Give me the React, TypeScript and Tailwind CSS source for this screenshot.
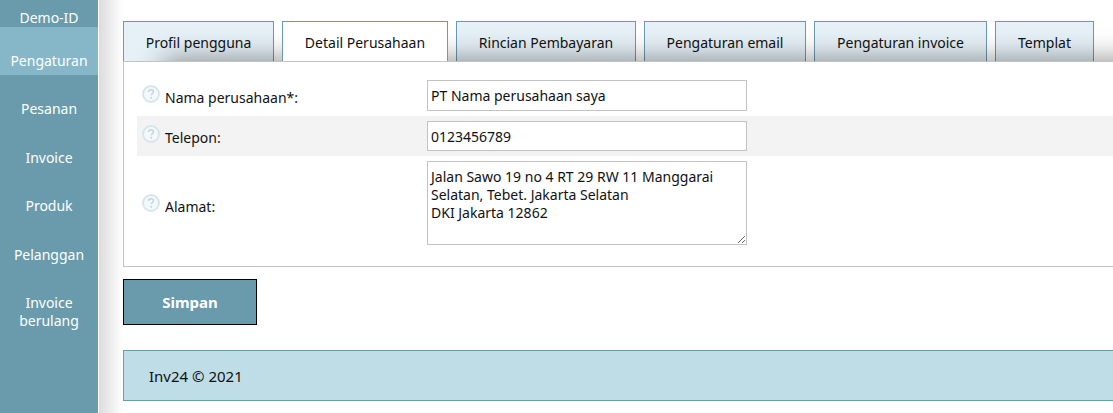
import { ReactNode } from "react";

const menuItems = ["Pengaturan", "Pesanan", "Invoice", "Produk", "Pelanggan", "Invoice berulang"];

const tabs = [
  { label: "Profil pengguna", width: "w-[151px]" },
  { label: "Detail Perusahaan", width: "w-[166px]" },
  { label: "Rincian Pembayaran", width: "w-[180px]" },
  { label: "Pengaturan email", width: "w-[162px]" },
  { label: "Pengaturan invoice", width: "w-[173px]" },
  { label: "Templat", width: "w-[99px]" },
];

const fieldClass =
  "block w-[320px] border border-[#c3c3c3] bg-white px-[3px] text-[14px] leading-[18px] text-[#111]";

const HelpIcon = () => (
  <svg className="mb-1 h-5 w-5 shrink-0" viewBox="0 0 20 20" fill="none" aria-hidden="true">
    <circle cx="10" cy="10" r="8" fill="#f3f8fa" stroke="#d8e6ec" strokeWidth="2" />
    <path
      d="M7.6 8.1c0-1.5 1-2.4 2.4-2.4s2.4.9 2.4 2.1c0 1.6-2.1 1.8-2.1 3.5"
      stroke="#c4d5dc"
      strokeWidth="1.5"
    />
    <circle cx="10.2" cy="13.8" r="1" fill="#c4d5dc" />
  </svg>
);

type RowProps = {
  id: string;
  label: string;
  shaded?: boolean;
  tall?: boolean;
  children: ReactNode;
};

const Row = ({ id, label, shaded, tall, children }: RowProps) => (
  <div className={shaded ? "flex items-center bg-[#f3f3f3] py-[5px]" : "flex items-center py-[5px]"}>
    <label
      htmlFor={id}
      className={`flex w-[290px] shrink-0 items-center gap-1 pl-1 ${tall ? "pt-1" : ""}`}
    >
      <HelpIcon />
      <span className="pt-1">{label}</span>
    </label>
    {children}
  </div>
);

const Sidebar = () => (
  <nav className="w-[98px] shrink-0 bg-[#699bac] text-center text-white">
    <a href="#demo" className="block pt-[9px]">
      Demo-ID
    </a>
    <ul>
      {menuItems.map((item, index) => (
        <li key={item} className="even:pb-px">
          <a
            href="#menu"
            className={index === 0 ? "block bg-[#85b7c9] px-2 pt-[25px] pb-[5px]" : "block px-2 pt-[25px] pb-[5px]"}
          >
            {item}
          </a>
        </li>
      ))}
    </ul>
  </nav>
);

const App = () => {
  return (
    <div className="flex min-h-screen overflow-hidden bg-white font-['Noto_Sans',sans-serif] text-[14px] leading-[18px] text-[#111]">
      <Sidebar />
      <div className="ml-px w-6 shrink-0 bg-linear-to-r from-[#dcdcdc] to-white" />
      <main className="-mr-10 min-w-0 grow pt-[21px]">
        <div className="flex gap-2" role="tablist">
          {tabs.map((tab, index) => (
            <button
              key={tab.label}
              type="button"
              role="tab"
              aria-selected={index === 1}
              className={`${tab.width} h-10 shrink-0 border border-b-0 border-[#699bac] pt-0.5 whitespace-nowrap ${
                index === 1 ? "relative z-20 bg-white" : "bg-[#e6f1f7]"
              }`}
            >
              {tab.label}
            </button>
          ))}
        </div>
        <form>
          <div className="relative z-10 border border-[#c3c3c3] bg-white pt-[13px] pb-4 pl-[13px] shadow-[20px_-22px_26px_-20px_rgba(0,0,0,0.42)]">
            <Row id="company" label="Nama perusahaan*:">
              <input id="company" type="text" defaultValue="PT Nama perusahaan saya" className={`${fieldClass} h-[31px]`} />
            </Row>
            <Row id="phone" label="Telepon:" shaded>
              <input id="phone" type="text" defaultValue="0123456789" className={`${fieldClass} h-[30px]`} />
            </Row>
            <Row id="address" label="Alamat:" tall>
              <textarea
                id="address"
                className={`${fieldClass} h-[84px] resize py-[6px]`}
                defaultValue={"Jalan Sawo 19 no 4 RT 29 RW 11 Manggarai Selatan, Tebet. Jakarta Selatan\nDKI Jakarta 12862"}
              />
            </Row>
          </div>
          <button
            type="button"
            className="mt-3 h-[46px] w-[134px] border border-black bg-[#699bac] text-[15px] font-bold text-white"
          >
            Simpan
          </button>
        </form>
        <footer className="mt-[25px] border border-[#699bac] bg-[#bedde7] px-[25px] pt-4 pb-[15px] text-[15px] leading-[18px]">
          Inv24 © 2021
        </footer>
      </main>
    </div>
  );
};

export default App;
